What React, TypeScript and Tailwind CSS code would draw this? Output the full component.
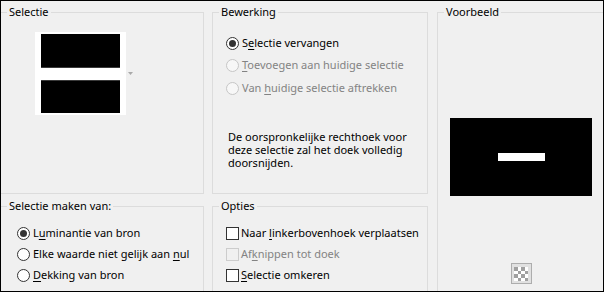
import React from 'react';

const font = { fontFamily: '"Noto Sans", "Open Sans", sans-serif' };

type OptProps = { checked?: boolean; disabled?: boolean; children: React.ReactNode };

const Radio: React.FC<OptProps> = ({ checked, disabled, children }) => (
  <div className="flex items-center h-[21px]">
    <span
      className={`w-[13px] h-[13px] rounded-full border flex items-center justify-center shrink-0 ${
        disabled ? 'border-[#c6c6c6] bg-[#f7f7f7]' : 'border-[#333333] bg-white'
      }`}
    >
      {checked && <span className="w-[7px] h-[7px] rounded-full bg-[#333333]"></span>}
    </span>
    <span className={`ml-[3px] ${disabled ? 'text-[#838383]' : 'text-black'}`}>{children}</span>
  </div>
);

const Check: React.FC<OptProps> = ({ disabled, children }) => (
  <div className="flex items-center h-[21px]">
    <span
      className={`w-[13px] h-[13px] border shrink-0 ${
        disabled ? 'border-[#cccccc] bg-[#f0f0f0]' : 'border-[#333333] bg-white'
      }`}
    ></span>
    <span className={`ml-[2px] ${disabled ? 'text-[#838383]' : 'text-black'}`}>{children}</span>
  </div>
);

const U: React.FC<{ children: React.ReactNode }> = ({ children }) => (
  <span className="underline underline-offset-[2px]">{children}</span>
);

const Legend: React.FC<{ children: React.ReactNode }> = ({ children }) => (
  <legend className="ml-[6px] px-[2px] leading-[16px] text-black">{children}</legend>
);

export default function App() {
  return (
    <div
      className="w-[604px] h-[292px] border border-black bg-[#f0f0f0] overflow-hidden text-[11px]"
      style={font}
    >
      <div className="flex ml-[-1px] mt-[3px]">
        {/* left column */}
        <div className="flex flex-col w-[204px] shrink-0">
          <fieldset className="h-[190px] border border-[#dcdcdc]">
            <Legend>Selectie</Legend>
            <div className="flex items-center ml-[34px] mt-[12px]">
              <div className="bg-white px-[6px] py-[2px]">
                <div className="w-[79px] h-[34px] bg-black border-b border-[#3a3a3a]"></div>
                <div className="h-[12px]"></div>
                <div className="w-[79px] h-[33px] bg-black border-t border-[#3a3a3a]"></div>
              </div>
              <svg width="5" height="3" viewBox="0 0 5 3" className="ml-[2px]">
                <polygon points="0,0 5,0 2.5,3" fill="#a9a9a9" />
              </svg>
            </div>
          </fieldset>
          <fieldset className="h-[120px] mt-[4px] border border-[#dcdcdc]">
            <Legend>Selectie maken van:</Legend>
            <div className="pl-[16px] pt-[9px]">
              <Radio checked>
                L<U>u</U>minantie van bron
              </Radio>
              <Radio>
                Elke waarde niet gelijk aan <U>n</U>ul
              </Radio>
              <Radio>
                <U>D</U>ekking van bron
              </Radio>
            </div>
          </fieldset>
        </div>

        {/* middle column */}
        <div className="flex flex-col w-[216px] ml-[8px] shrink-0">
          <fieldset className="h-[190px] border border-[#dcdcdc]">
            <Legend>Bewerking</Legend>
            <div className="pl-[13px] pt-[12px] flex flex-col">
              <div className="h-[22px] flex items-center">
                <Radio checked>
                  S<U>e</U>lectie vervangen
                </Radio>
              </div>
              <div className="h-[23px] flex items-center">
                <Radio disabled>
                  <U>T</U>oevoegen aan huidige selectie
                </Radio>
              </div>
              <div className="h-[22px] flex items-center">
                <Radio disabled>
                  Van <U>h</U>uidige selectie aftrekken
                </Radio>
              </div>
            </div>
            <p className="ml-[15px] mt-[31px] leading-[13px] text-black">
              De oorspronkelijke rechthoek voor
              <br />
              deze selectie zal het doek volledig
              <br />
              doorsnijden.
            </p>
          </fieldset>
          <fieldset className="h-[120px] mt-[4px] border border-[#dcdcdc]">
            <Legend>Opties</Legend>
            <div className="pl-[13px] pt-[9px]">
              <Check>
                Naar <U>l</U>inkerbovenhoek verplaatsen
              </Check>
              <Check disabled>
                Af<U>k</U>nippen tot doek
              </Check>
              <Check>
                <U>S</U>electie omkeren
              </Check>
            </div>
          </fieldset>
        </div>

        {/* right column */}
        <fieldset className="w-[168px] h-[310px] ml-[9px] shrink-0 border border-[#dcdcdc]">
          <Legend>Voorbeeld</Legend>
          <div className="flex flex-col items-center">
            <div className="mt-[98px] w-[142px] h-[78px] bg-black flex items-center justify-center">
              <div className="w-[47px] h-[8px] bg-white"></div>
            </div>
            <div className="mt-[67px] w-[21px] h-[21px] border border-[#adadad] bg-[#e1e1e1] flex items-center justify-center">
              <svg width="14" height="14" viewBox="0 0 4 4" shapeRendering="crispEdges">
                <rect width="4" height="4" fill="#ffffff" />
                <rect x="0" y="0" width="1" height="1" fill="#a0a0a0" />
                <rect x="2" y="0" width="1" height="1" fill="#a0a0a0" />
                <rect x="1" y="1" width="1" height="1" fill="#a0a0a0" />
                <rect x="3" y="1" width="1" height="1" fill="#a0a0a0" />
                <rect x="0" y="2" width="1" height="1" fill="#a0a0a0" />
                <rect x="2" y="2" width="1" height="1" fill="#a0a0a0" />
                <rect x="1" y="3" width="1" height="1" fill="#a0a0a0" />
                <rect x="3" y="3" width="1" height="1" fill="#a0a0a0" />
              </svg>
            </div>
          </div>
        </fieldset>
      </div>
    </div>
  );
}
